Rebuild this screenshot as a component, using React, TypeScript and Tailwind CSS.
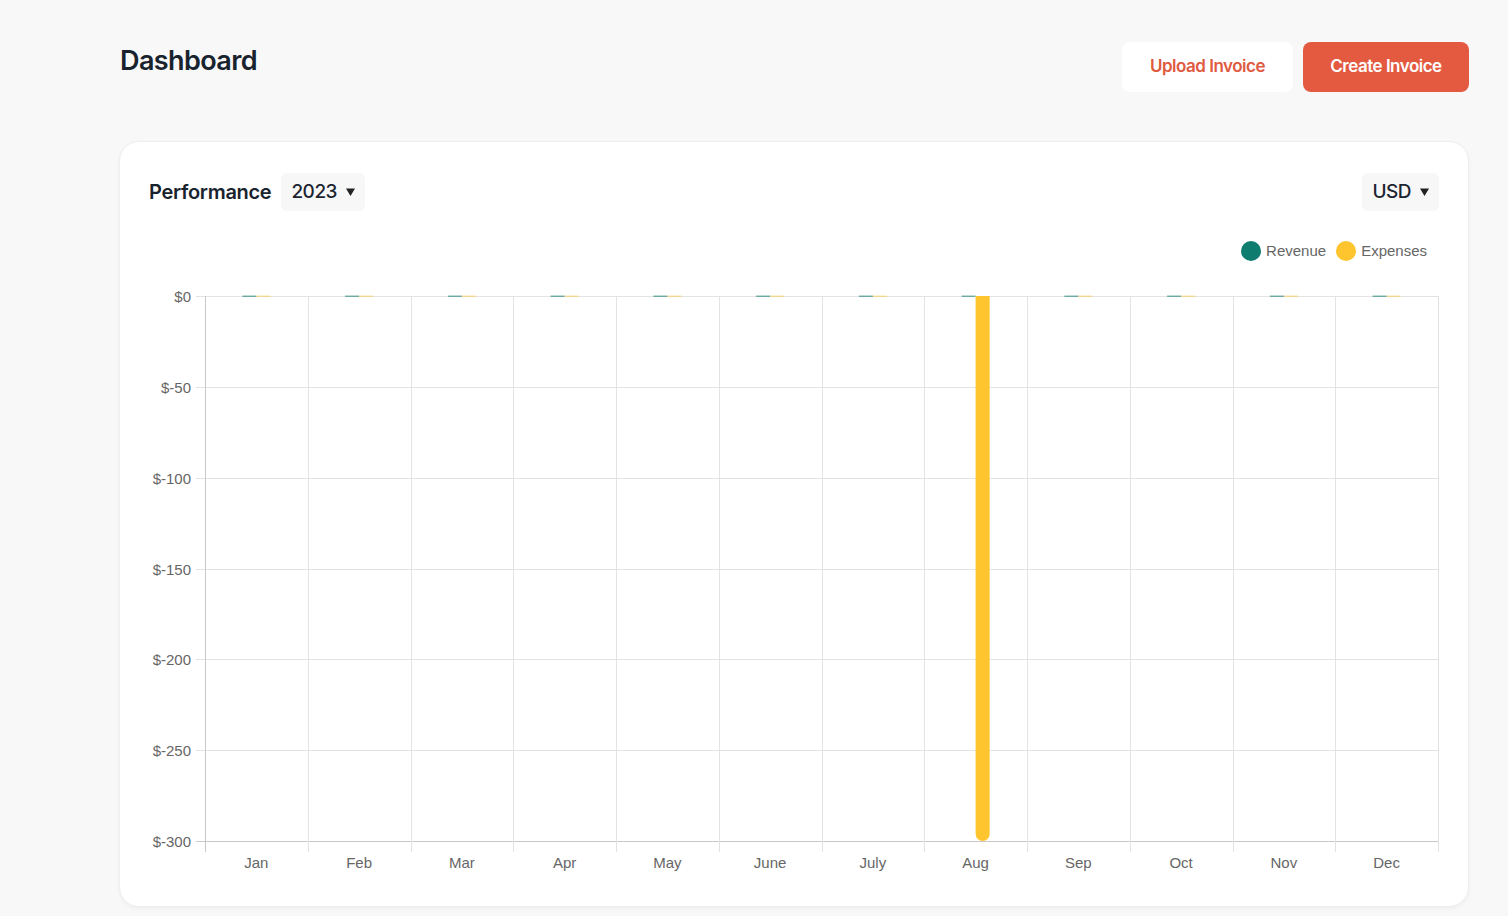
import React from "react"

const months = ["Jan", "Feb", "Mar", "Apr", "May", "June", "July", "Aug", "Sep", "Oct", "Nov", "Dec"]
const revenue = [0, 0, 0, 0, 0, 0, 0, 0, 0, 0, 0, 0]
const expenses = [0, 0, 0, 0, 0, 0, 0, -300, 0, 0, 0, 0]
const ticks = [0, -50, -100, -150, -200, -250, -300]

// plot box inside the svg
const L = 56
const R = 1289
const T = 26
const B = 571
const colW = (R - L) / 12
const yOf = (v: number) => T + ((0 - v) / 300) * (B - T)

const Caret = () => (
  <svg width="9" height="8" viewBox="0 0 9 8" className="ml-[9px]">
    <path d="M0 0.5h9L4.5 8z" fill="#222" />
  </svg>
)

const Select = ({ label }: { label: string }) => (
  <button
    type="button"
    className="flex h-[38px] items-center rounded-md bg-[#f7f7f7] pl-[10px] pr-[10px] text-[19px] font-medium tracking-[-0.5px] text-[#1c2430]"
  >
    {label}
    <Caret />
  </button>
)

const barPath = (x: number, w: number, y0: number, y1: number) => {
  // flat at zero, rounded at the far end
  const r = Math.min(w / 2, Math.abs(y1 - y0))
  if (y1 > y0) {
    return `M${x} ${y0}H${x + w}V${y1 - r}A${r} ${r} 0 0 1 ${x + w - r} ${y1}H${x + r}A${r} ${r} 0 0 1 ${x} ${y1 - r}Z`
  }
  return `M${x} ${y0}H${x + w}V${y1 + r}A${r} ${r} 0 0 0 ${x + w - r} ${y1}H${x + r}A${r} ${r} 0 0 0 ${x} ${y1 + r}Z`
}

const Chart = () => (
  <svg width="1290" height="620" viewBox="0 0 1290 620" className="block" style={{ fontFamily: "'Liberation Sans', Arial, sans-serif" }}>
    {/* horizontal grid + y labels */}
    {ticks.map((t) => {
      const y = Math.round(yOf(t)) + 0.5
      return (
        <g key={t}>
          <line x1={47} x2={R} y1={y} y2={y} stroke={t === -300 ? "#c8c8c8" : "#e3e3e3"} />
          <text x={42} y={y + 5} textAnchor="end" fontSize="15" fill="#666">
            {`$${t}`}
          </text>
        </g>
      )
    })}
    {/* vertical grid */}
    {Array.from({ length: 13 }).map((_, i) => {
      const x = Math.round(L + i * colW) + 0.5
      return <line key={i} x1={x} x2={x} y1={T} y2={B + 11} stroke={i === 0 ? "#c8c8c8" : "#e3e3e3"} />
    })}
    {/* bars */}
    {months.map((m, i) => {
      const c = L + i * colW + colW / 2
      const zero = yOf(0)
      return (
        <g key={m}>
          {revenue[i] === 0 ? (
            <rect x={c - 14} y={zero - 0.5} width={14} height={1.5} fill="#0e7c6f" opacity={0.55} />
          ) : (
            <path d={barPath(c - 14, 14, zero, yOf(revenue[i]))} fill="#0e7c6f" />
          )}
          {expenses[i] === 0 ? (
            <rect x={c} y={zero - 0.5} width={14} height={1.5} fill="#fec52e" opacity={0.45} />
          ) : (
            <path d={barPath(c, 14, zero, yOf(expenses[i]))} fill="#fec52e" />
          )}
          <text x={c} y={598} textAnchor="middle" fontSize="15" fill="#666">
            {m}
          </text>
        </g>
      )
    })}
  </svg>
)

export default function App() {
  return (
    <div className="min-h-screen bg-[#f8f8f8] pl-[119px] pr-[39px] pb-[10px]" style={{ fontFamily: "Inter, 'Noto Sans', sans-serif" }}>
      <header className="flex items-start justify-between pt-[42px]">
        <h1 className="mt-[1px] pl-[1px] text-[27px] font-semibold leading-[36px] tracking-[-0.6px] text-[#18232e]">Dashboard</h1>
        <div className="flex gap-[10px]">
          <button type="button" className="h-[50px] w-[171px] rounded-lg bg-white text-[17px] font-semibold tracking-[-0.5px] text-[#e05a3f]">
            Upload Invoice
          </button>
          <button type="button" className="h-[50px] w-[166px] rounded-lg bg-[#e35a41] text-[17px] font-semibold tracking-[-0.5px] text-white">
            Create Invoice
          </button>
        </div>
      </header>

      <section className="mt-[49px] rounded-[20px] border border-[#eeeeee] bg-white pl-[29px] pr-[29px] pt-[31px] pb-[16px] shadow-[0_2px_4px_rgba(0,0,0,0.04)]">
        <div className="flex items-center justify-between">
          <div className="flex items-center gap-[10px]">
            <h2 className="text-[20px] font-semibold tracking-[-0.3px] text-[#18232e]">Performance</h2>
            <Select label="2023" />
          </div>
          <Select label="USD" />
        </div>

        <div className="mt-[30px] flex h-[20px] items-center justify-end gap-[10px] pr-[12px] text-[15px] text-[#666]" style={{ fontFamily: "'Liberation Sans', Arial, sans-serif" }}>
          <span className="flex items-center gap-[5px]">
            <span className="h-[20px] w-[20px] rounded-full bg-[#0e7c6f]" />
            Revenue
          </span>
          <span className="flex items-center gap-[5px]">
            <span className="h-[20px] w-[20px] rounded-full bg-[#fec52e]" />
            Expenses
          </span>
        </div>

        <div className="mt-[9px]">
          <Chart />
        </div>
      </section>
    </div>
  )
}
